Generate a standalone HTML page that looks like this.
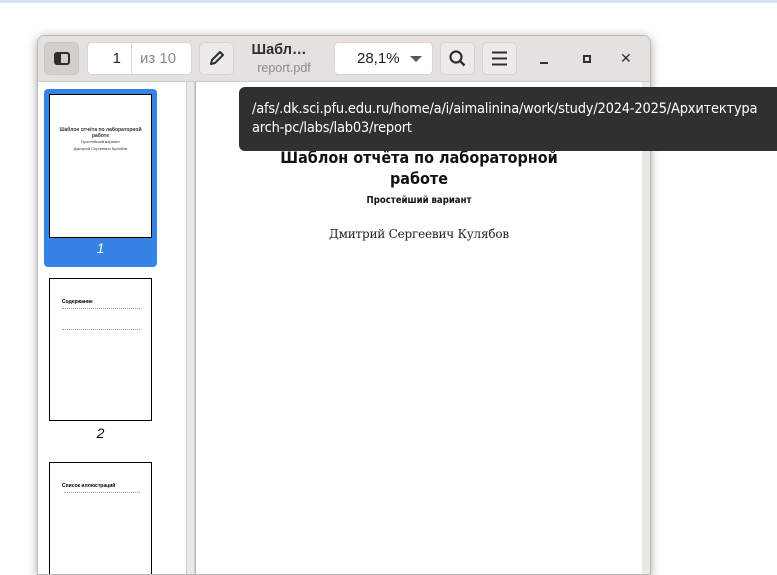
<!DOCTYPE html>
<html><head><meta charset="utf-8"><style>
*{margin:0;padding:0;box-sizing:border-box}
body{width:777px;height:561px;overflow:hidden;background:#fff;font-family:"Liberation Sans","DejaVu Sans",sans-serif;position:relative}
.stripe{position:absolute;left:0;top:0;width:777px;height:3px;background:#d6e4f5}
.win{position:absolute;left:37px;top:35px;width:614px;height:540px;background:#fff;border-radius:8px 8px 0 0;box-shadow:0 2px 10px rgba(0,0,0,.35);overflow:hidden;border:1px solid #bdbab5}
.tb{position:absolute;left:0;top:0;width:100%;height:46px;background:#e4e1de;border-bottom:1px solid #cfccc8}
.btn{position:absolute;top:6px;height:33px;border-radius:5px;background:#edebe9;border:1px solid #d6d3cf}
.side{position:absolute;left:0;top:46px;width:148px;bottom:0;background:#fff}
.sb{position:absolute;left:148px;top:46px;width:9px;bottom:0;background:#ebe9e6;border-left:1px solid #d0cdc9;border-right:1px solid #d0cdc9}
.main{position:absolute;left:157px;top:46px;right:0;bottom:0;background:#ebe9e6}
.page{position:absolute;left:0;top:0;width:447px;bottom:0;background:#fff;border-left:1px solid #bbb}
.th{position:absolute;left:11px;width:103px;background:#fff;border:1.5px solid #000}
.tip{position:absolute;left:239px;top:87px;width:560px;height:64px;background:#303030;border-radius:6px;color:#fff;font-size:14.5px;line-height:19px;padding:13px 0 0 13px;font-family:"DejaVu Sans Condensed","Liberation Sans",sans-serif;letter-spacing:-.2px;white-space:nowrap}
.mini{position:absolute;left:0;width:100%;text-align:center;font-size:5px;color:#333}
</style></head><body>
<div class="stripe"></div>
<div class="win">
 <div class="tb">
  <div class="btn" style="left:6px;width:35px;background:#d3d0cc;border-color:#cac7c3"><div style="position:absolute;left:9px;top:9px;width:16px;height:13px;border:2px solid #2e2e2e;border-radius:3px;"><div style="width:5px;height:100%;background:#2e2e2e"></div></div></div>
  <div class="btn" style="left:49px;width:105px;background:#fff;border-color:#dad7d3">
   <div style="position:absolute;left:0;top:0;width:44px;height:31px;border-right:1px solid #dad7d3;text-align:right;padding-right:10px;line-height:31px;font-size:15px;color:#222">1</div>
   <div style="position:absolute;left:52px;top:0;line-height:31px;font-size:15px;color:#8a8a8a">из 10</div>
  </div>
  <div class="btn" style="left:161px;width:35px"><svg width="33" height="31" viewBox="0 0 33 31"><path d="M11 21l1-4 8-8 3 3-8 8z" fill="none" stroke="#2e2e2e" stroke-width="2" stroke-linejoin="round"/></svg></div>
  <div style="position:absolute;left:201px;top:6px;width:80px;text-align:center;font-weight:bold;font-size:14.5px;color:#2e2e2e">Шабл…</div>
  <div style="position:absolute;left:201px;top:25px;width:90px;text-align:center;font-size:12.5px;color:#8a8a8a">report.pdf</div>
  <div class="btn" style="left:296px;width:99px;background:#fff;border-color:#dad7d3"><span style="position:absolute;left:22px;top:7px;font-size:15px;color:#222">28,1%</span><span style="position:absolute;left:75px;top:13px;border-left:6px solid transparent;border-right:6px solid transparent;border-top:6px solid #555"></span></div>
  <div class="btn" style="left:402px;width:35px"><svg width="33" height="31" viewBox="0 0 33 31"><circle cx="15" cy="14" r="5.5" fill="none" stroke="#2e2e2e" stroke-width="2.2"/><path d="M19 18l4.5 4.5" stroke="#2e2e2e" stroke-width="2.4"/></svg></div>
  <div class="btn" style="left:444px;width:35px"><svg width="33" height="31" viewBox="0 0 33 31"><path d="M9 9.5h15M9 15.5h15M9 21.5h15" stroke="#2e2e2e" stroke-width="2"/></svg></div>
  <div style="position:absolute;left:502px;top:26px;width:8px;height:2px;background:#2e2e2e"></div>
  <div style="position:absolute;left:545px;top:19px;width:8px;height:8px;border:2px solid #2e2e2e"></div>
  <div style="position:absolute;left:582px;top:14px;font-size:14px;font-weight:bold;color:#2e2e2e">✕</div>
 </div>
 <div class="side">
  <div style="position:absolute;left:6px;top:7px;width:113px;height:178px;background:#3584e4;border-radius:4px"></div>
  <div class="th" style="top:12px;height:144px">
   <div class="mini" style="top:32px;font-weight:bold">Шаблон отчёта по лабораторной<br>работе</div>
   <div class="mini" style="top:44px;font-size:4px">Простейший вариант</div>
   <div class="mini" style="top:51px;font-size:4px">Дмитрий Сергеевич Кулябов</div>
  </div>
  <div style="position:absolute;left:6px;top:158px;width:113px;text-align:center;color:#fff;font-style:italic;font-size:14px">1</div>
  <div class="th" style="top:196px;height:143px">
   <div style="position:absolute;left:12px;top:20px;font-size:5px;font-weight:bold">Содержание</div>
   <div style="position:absolute;left:12px;top:29px;width:78px;height:22px;border-top:1px dotted #999;border-bottom:1px dotted #999"></div>
  </div>
  <div style="position:absolute;left:6px;top:343px;width:113px;text-align:center;color:#000;font-style:italic;font-size:14px">2</div>
  <div class="th" style="top:380px;height:120px">
   <div style="position:absolute;left:12px;top:20px;font-size:5px;font-weight:bold">Список иллюстраций</div>
   <div style="position:absolute;left:14px;top:29px;width:76px;border-top:1px dotted #aaa"></div>
  </div>
 </div>
 <div class="sb"></div>
 <div class="main"><div class="page">
  <div style="position:absolute;left:0;top:65px;width:446px;text-align:center;font-family:'DejaVu Sans Condensed','DejaVu Sans',sans-serif;font-weight:bold;font-size:16px;line-height:21px;color:#111">Шаблон отчёта по лабораторной<br>работе</div>
  <div style="position:absolute;left:0;top:113px;width:446px;text-align:center;font-family:'DejaVu Sans Condensed','DejaVu Sans',sans-serif;font-weight:bold;font-size:9.5px;color:#111">Простейший вариант</div>
  <div style="position:absolute;left:0;top:145px;width:446px;text-align:center;font-family:'DejaVu Serif','Liberation Serif',serif;font-size:12px;color:#222;letter-spacing:-.2px">Дмитрий Сергеевич Кулябов</div>
 </div></div>
</div>
<div class="tip">/afs/.dk.sci.pfu.edu.ru/home/a/i/aimalinina/work/study/2024-2025/Архитектура<br>arch-pc/labs/lab03/report</div>
</body></html>
